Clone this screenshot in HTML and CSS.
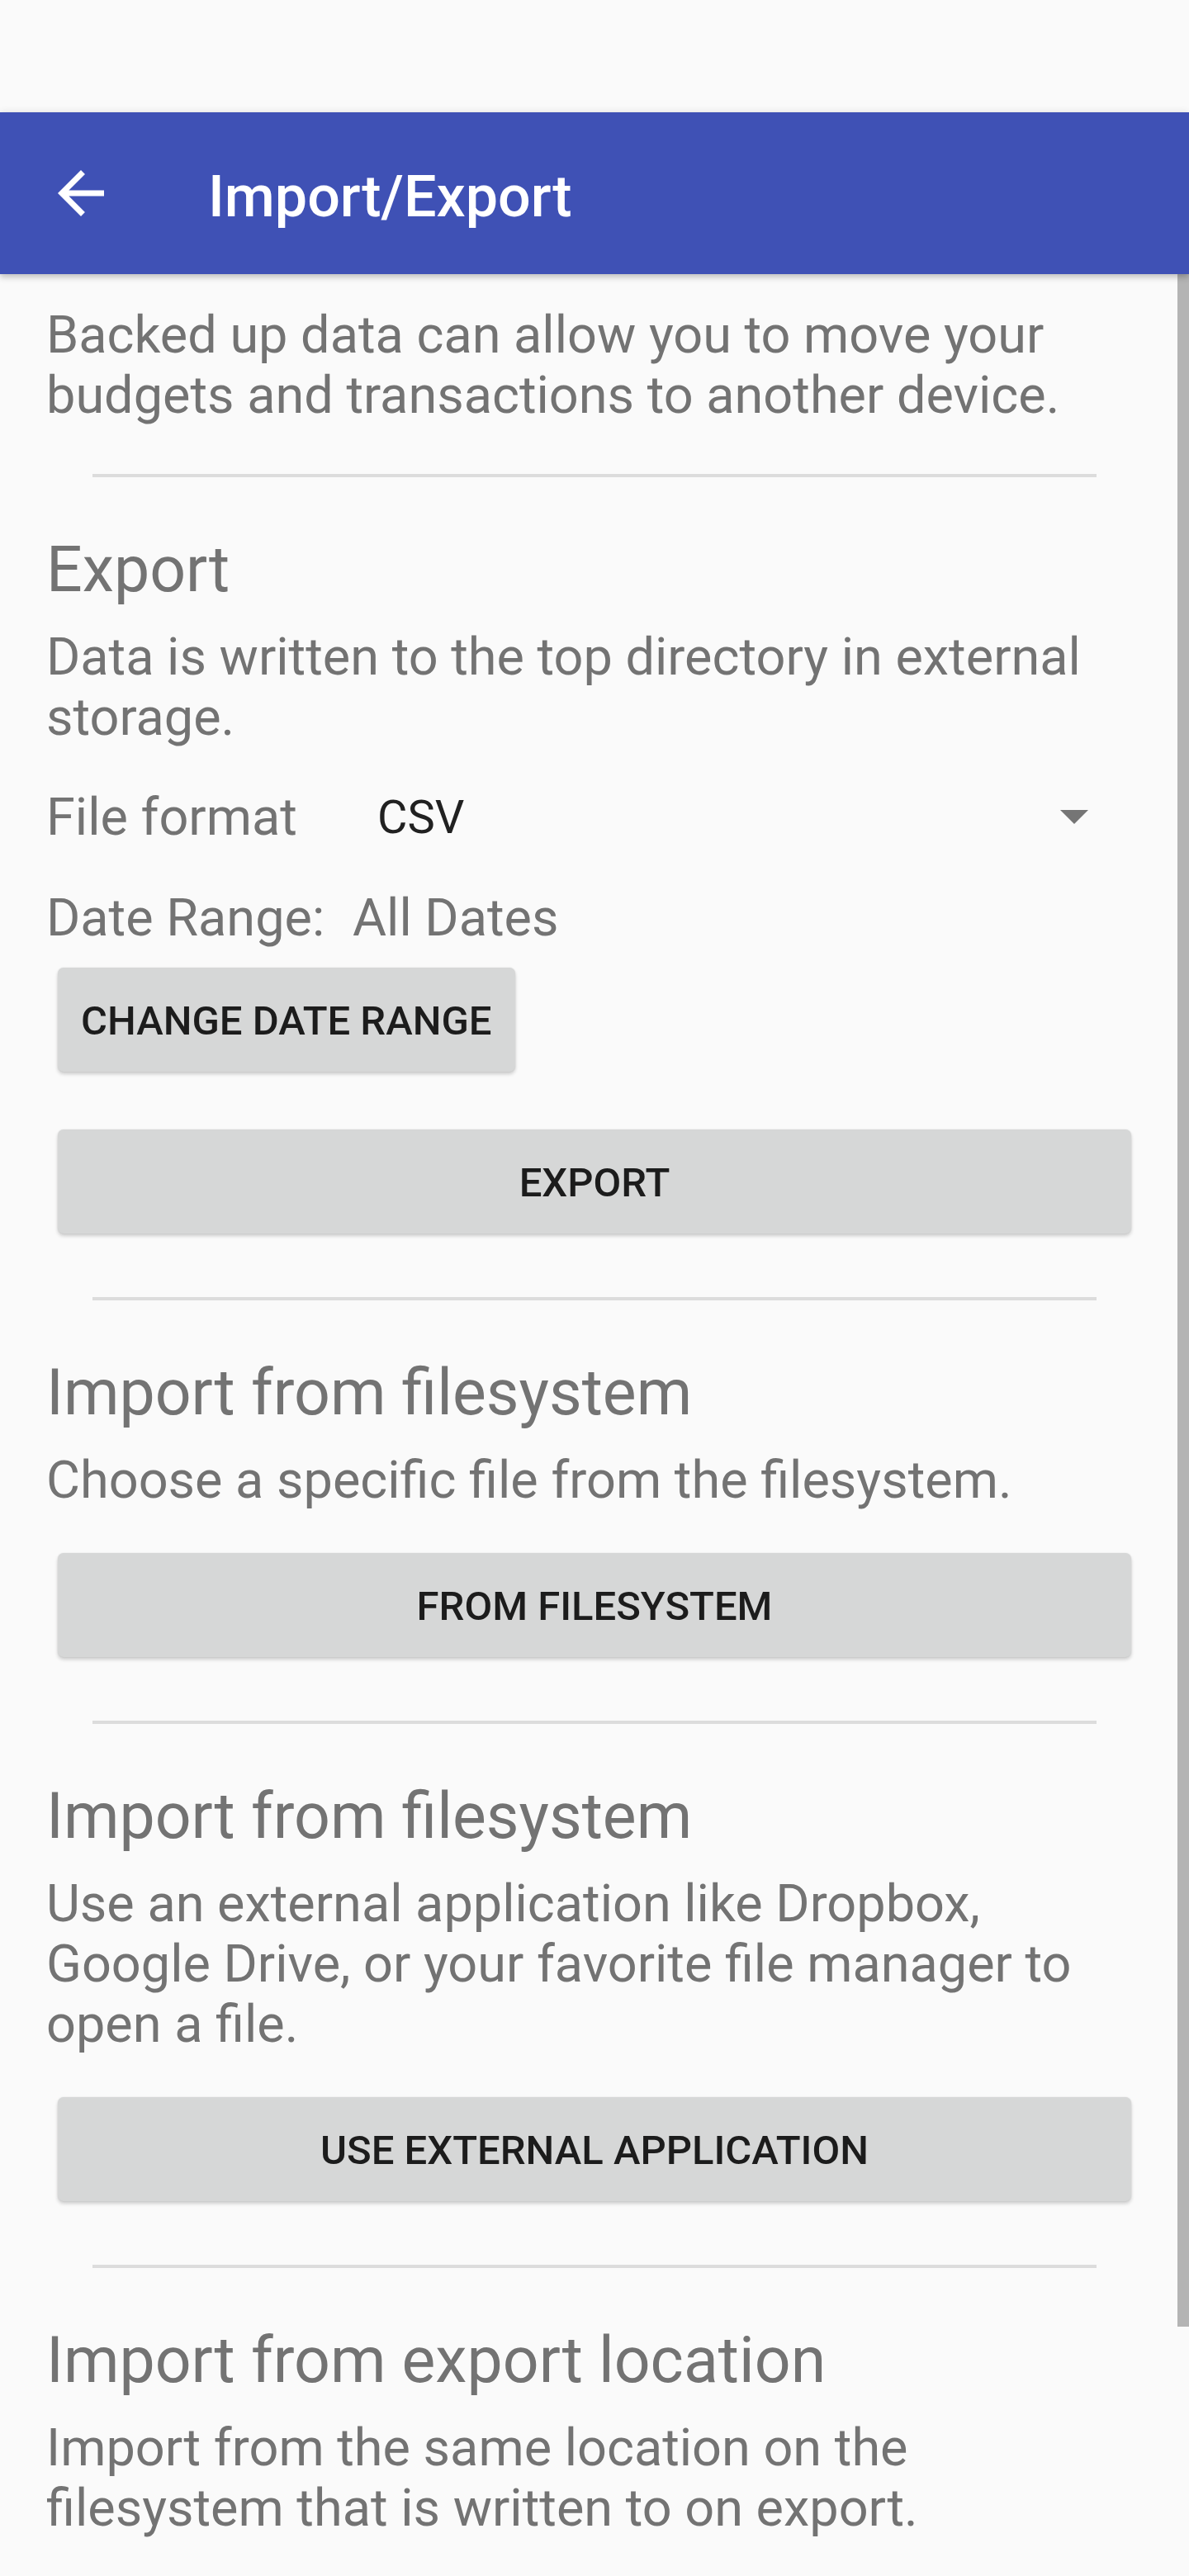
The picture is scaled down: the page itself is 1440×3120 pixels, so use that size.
FILE: index.html
```html
<!DOCTYPE html>
<html lang="en">
<head>
<meta charset="utf-8">
<title>Import/Export</title>
<link rel="stylesheet" href="styles.css">
</head>
<body>
<div class="statusbar"></div>
<header class="toolbar">
  <svg class="nav-icon" viewBox="0 0 24 24" width="84" height="84" aria-hidden="true">
    <path d="M20 11H7.83l5.59-5.59L12 4l-8 8 8 8 1.41-1.41L7.83 13H20v-2z" fill="#ffffff"/>
  </svg>
  <h1 class="title">Import/Export</h1>
</header>
<main class="content">
  <p class="body intro">Backed up data can allow you to move your<br>budgets and transactions to another device.</p>
  <div class="divider divider-intro"></div>

  <section class="section">
    <h2 class="heading">Export</h2>
    <p class="body">Data is written to the top directory in external<br>storage.</p>
    <div class="row format-row">
      <span class="label format-label">File format</span>
      <span class="spinner-value">CSV</span>
      <span class="spinner-arrow"></span>
    </div>
    <div class="row date-row">
      <span class="label date-label">Date Range:</span>
      <span class="date-value">All Dates</span>
    </div>
    <button class="btn btn-inline">CHANGE DATE RANGE</button>
    <button class="btn btn-block btn-export">EXPORT</button>
  </section>
  <div class="divider"></div>

  <section class="section">
    <h2 class="heading">Import from filesystem</h2>
    <p class="body">Choose a specific file from the filesystem.</p>
    <button class="btn btn-block btn-after-text">FROM FILESYSTEM</button>
  </section>
  <div class="divider"></div>

  <section class="section">
    <h2 class="heading">Import from filesystem</h2>
    <p class="body">Use an external application like Dropbox,<br>Google Drive, or your favorite file manager to<br>open a file.</p>
    <button class="btn btn-block btn-after-text">USE EXTERNAL APPLICATION</button>
  </section>
  <div class="divider"></div>

  <section class="section">
    <h2 class="heading">Import from export location</h2>
    <p class="body">Import from the same location on the<br>filesystem that is written to on export.</p>
  </section>
</main>
<div class="scrollbar"></div>
</body>
</html>
```

FILE: styles.css
```css
html, body {
  margin: 0;
  padding: 0;
  background: #fafafa;
}

body {
  font-family: Roboto, "Noto Sans", "Liberation Sans", sans-serif;
  position: relative;
  min-height: 3120px;
  overflow: hidden;
}

.statusbar {
  height: 136px;
  background: #fafafa;
}

.toolbar {
  position: relative;
  z-index: 2;
  height: 196px;
  background: #3f51b5;
  display: flex;
  align-items: center;
  padding-left: 56px;
  box-shadow: 0 4px 7px rgba(0, 0, 0, 0.22), 0 -2px 8px rgba(0, 0, 0, 0.06);
}

.nav-icon {
  display: block;
  flex: 0 0 84px;
}

.title {
  margin: 0 0 0 112px;
  padding-top: 8px;
  font-size: 70px;
  font-weight: 500;
  color: #ffffff;
  line-height: normal;
}

.content {
  padding: 0 56px;
}

.body {
  margin: 24px 0 0;
  font-size: 63px;
  line-height: 73px;
  color: #737373;
  font-weight: 400;
}

.intro {
  margin-top: 37px;
}

.divider {
  height: 4px;
  background: #dcdcdc;
  margin: 77px 56px 0;
}

.divider-intro {
  margin-top: 59px;
}

.heading {
  margin: 67px 0 0;
  font-size: 77px;
  line-height: 90px;
  font-weight: 400;
  color: #737373;
}

.row {
  display: flex;
  align-items: baseline;
  font-size: 63px;
  line-height: 73px;
  color: #737373;
}

.format-row {
  margin-top: 47px;
  align-items: center;
}

.format-label {
  flex: 0 0 401px;
}

.spinner-value {
  flex: 1;
  font-size: 56px;
  color: #212121;
  padding-top: 2px;
}

.spinner-arrow {
  flex: 0 0 auto;
  width: 0;
  height: 0;
  border-left: 17.5px solid transparent;
  border-right: 17.5px solid transparent;
  border-top: 17px solid #757575;
  margin-right: 66px;
}

.date-row {
  margin-top: 48px;
}

.date-label {
  flex: 0 0 371px;
}

.btn {
  display: block;
  box-sizing: border-box;
  height: 126px;
  margin: 0 0 0 14px;
  padding: 4px 28px 0;
  border: none;
  border-radius: 7px;
  background: #d6d7d7;
  font-family: Roboto, "Noto Sans", "Liberation Sans", sans-serif;
  font-size: 49px;
  font-weight: 500;
  line-height: 122px;
  color: #1c1c1c;
  text-align: center;
  box-shadow: 0 3px 4px rgba(0, 0, 0, 0.18), 0 0 2px rgba(0, 0, 0, 0.10);
}

.btn-inline {
  margin-top: 24px;
}

.btn-block {
  width: calc(100% - 28px);
}

.btn-export {
  margin-top: 70px;
}

.btn-after-text {
  margin-top: 52px;
}

.scrollbar {
  position: absolute;
  top: 332px;
  right: 0;
  width: 14px;
  height: 2486px;
  background: #b4b4b4;
}
```
